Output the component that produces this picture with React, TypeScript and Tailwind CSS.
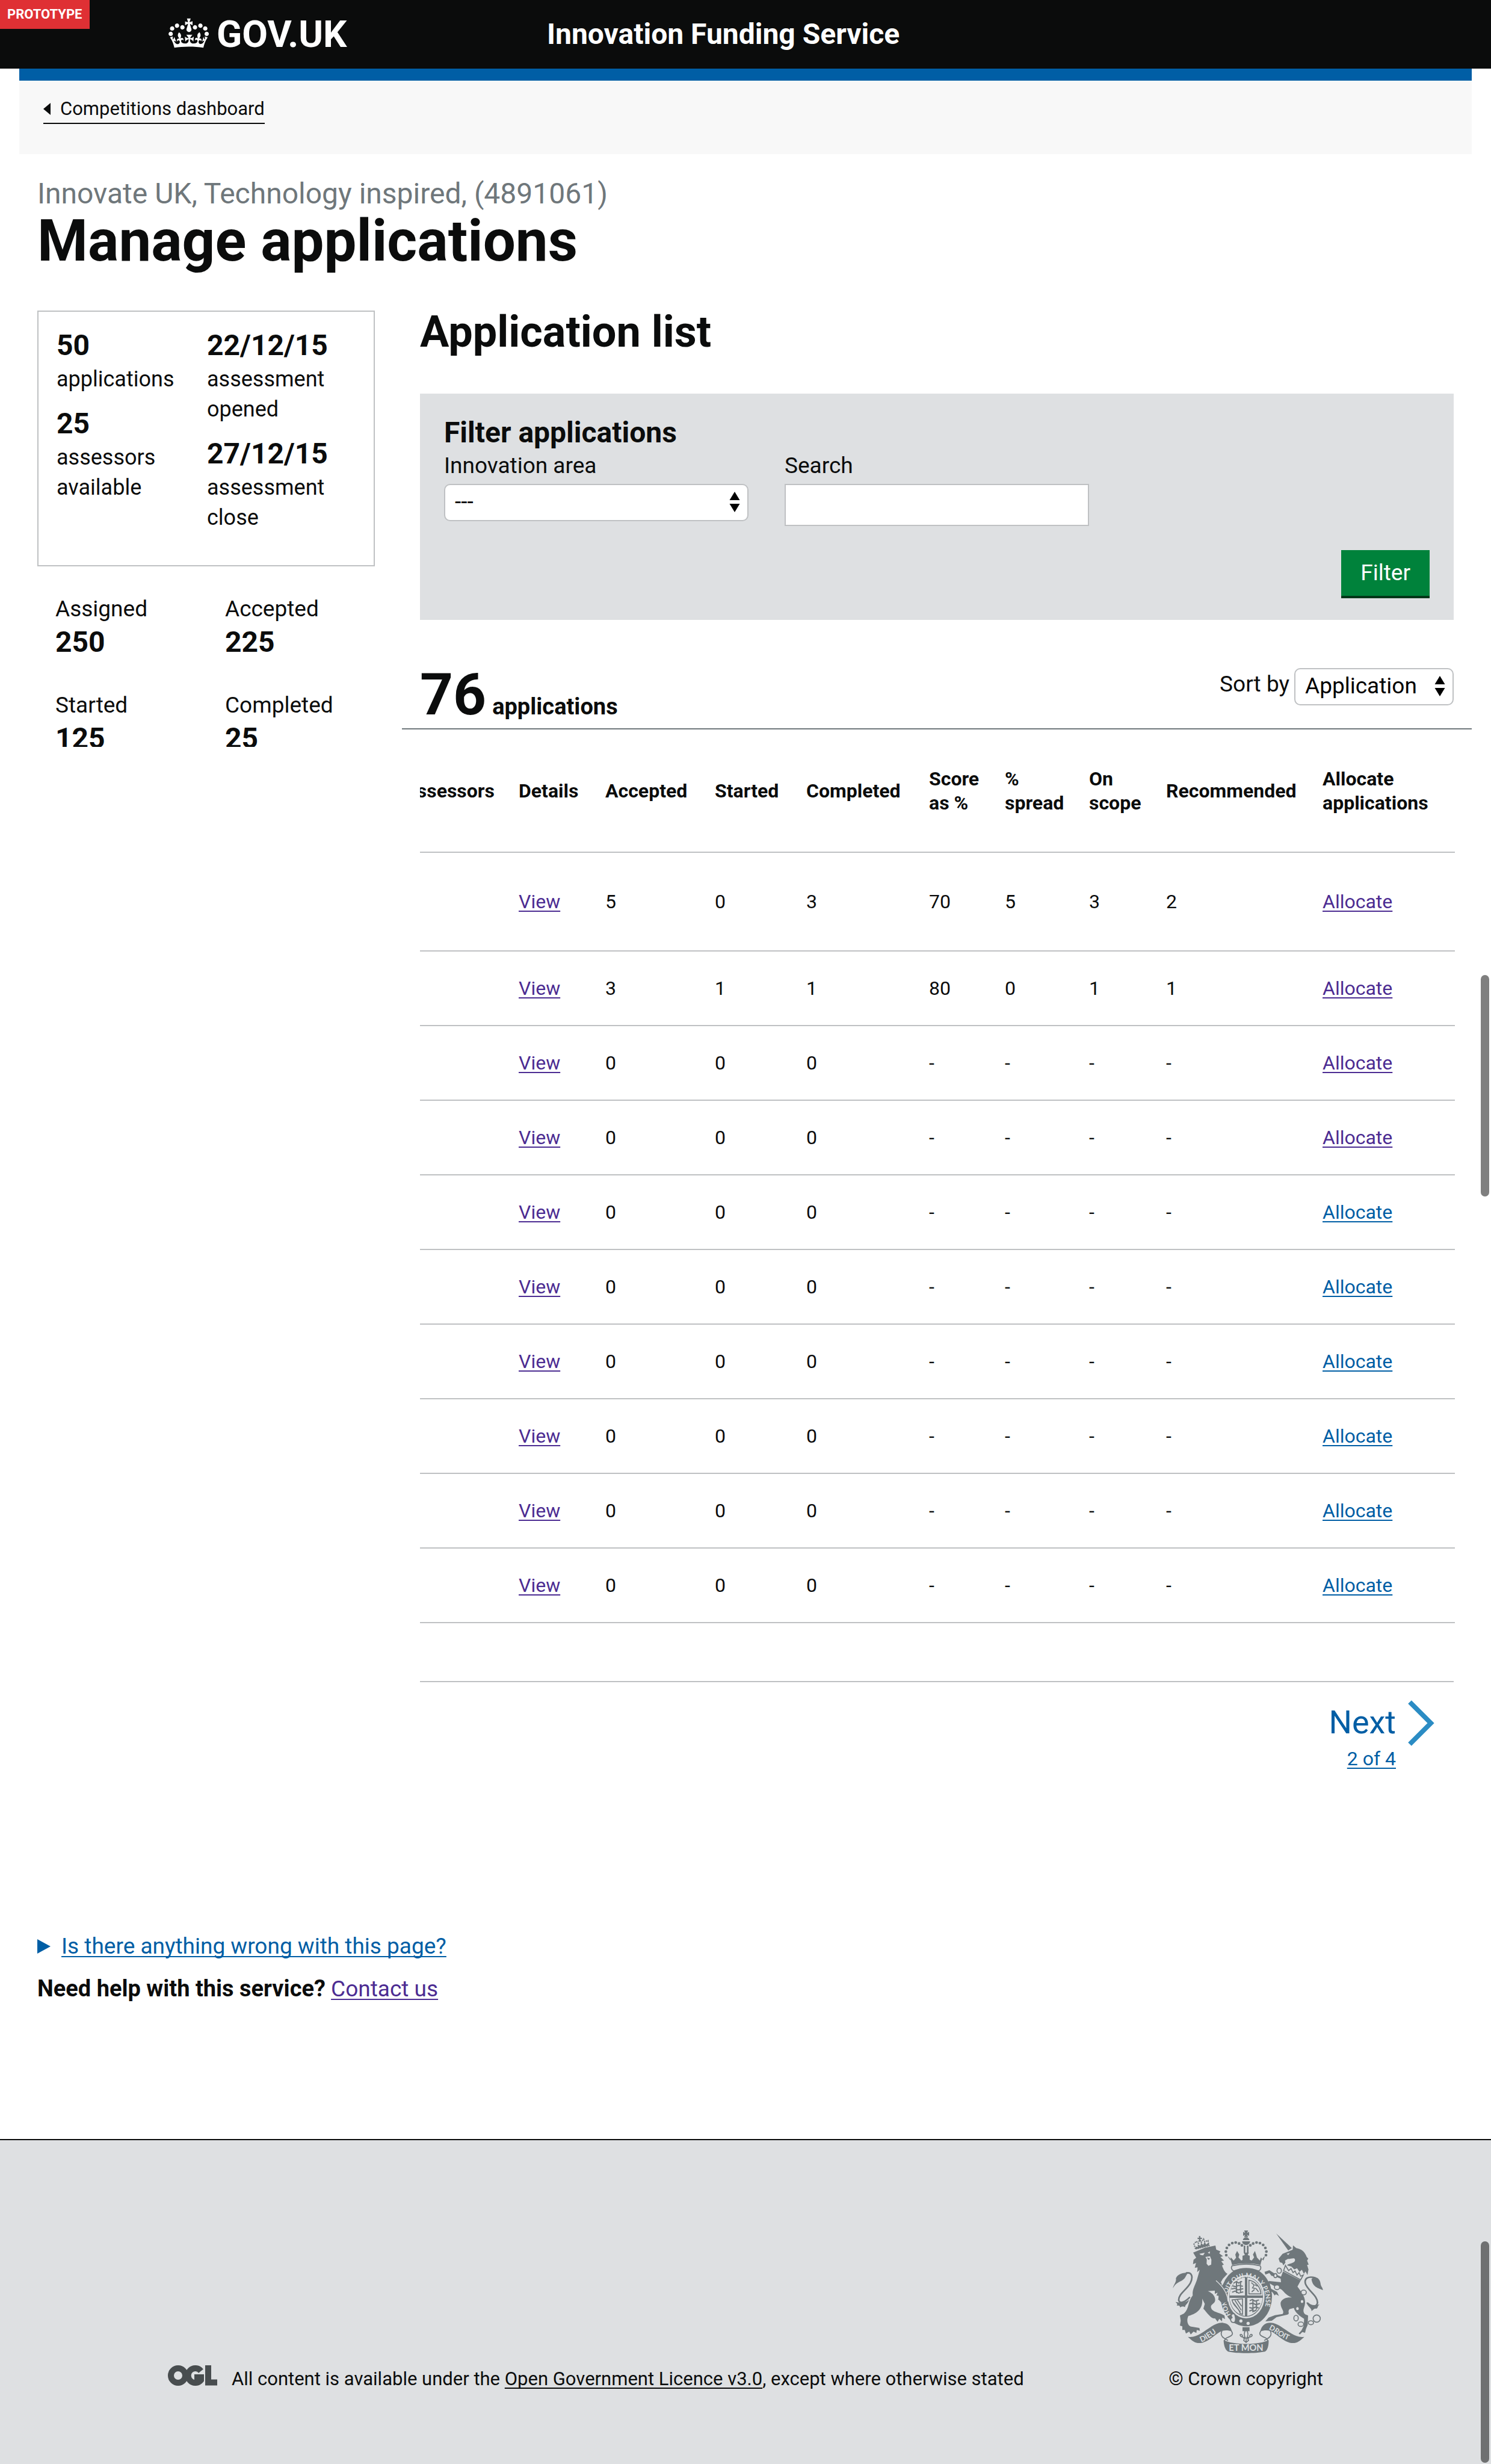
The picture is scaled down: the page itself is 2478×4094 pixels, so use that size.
import type { ReactNode } from "react";

type Row = {
  accepted: number;
  started: number;
  completed: number;
  score: string;
  spread: string;
  scope: string;
  recommended: string;
  visited: boolean;
};

const emptyRow = (visited: boolean): Row => ({
  accepted: 0,
  started: 0,
  completed: 0,
  score: "-",
  spread: "-",
  scope: "-",
  recommended: "-",
  visited,
});

const rows: Row[] = [
  { accepted: 5, started: 0, completed: 3, score: "70", spread: "5", scope: "3", recommended: "2", visited: true },
  { accepted: 3, started: 1, completed: 1, score: "80", spread: "0", scope: "1", recommended: "1", visited: true },
  emptyRow(true),
  emptyRow(true),
  emptyRow(false),
  emptyRow(false),
  emptyRow(false),
  emptyRow(false),
  emptyRow(false),
  emptyRow(false),
];

const headings = [
  "Details",
  "Accepted",
  "Started",
  "Completed",
  "Score as %",
  "% spread",
  "On scope",
  "Recommended",
  "Allocate applications",
];

function TextLink({ visited = false, children }: { visited?: boolean; children: ReactNode }) {
  return (
    <a
      href="#"
      className={`underline decoration-2 underline-offset-4 [text-decoration-skip-ink:none] ${
        visited ? "text-[#4c2c92]" : "text-[#005ea5]"
      }`}
    >
      {children}
    </a>
  );
}

function CrownLogo() {
  return (
    <svg viewBox="0 0 36 32" className="mb-2 h-[60px] w-[68px]" fill="currentColor" aria-hidden="true">
      <path d="M6.7 12.2c1 .4 2.1-.1 2.5-1s-.1-2.1-1-2.5c-1-.4-2.1.1-2.5 1-.4 1 0 2.1 1 2.5m-4.3 2.5c1 .4 2.1-.1 2.5-1s-.1-2.1-1-2.5c-1-.4-2.1.1-2.5 1-.5 1 0 2.1 1 2.5m-1.3 4.8c1 .4 2.1-.1 2.5-1s-.1-2.1-1-2.5c-1-.4-2.1.1-2.5 1-.4 1 0 2.1 1 2.5m10.4-5.8c1 .4 2.1-.1 2.5-1s-.1-2.1-1-2.5c-1-.4-2.1.1-2.5 1s0 2.1 1 2.5m17.4-1.5c-1 .4-2.1-.1-2.5-1s.1-2.1 1-2.5c1-.4 2.1.1 2.5 1 .5 1 0 2.1-1 2.5m4.3 2.5c-1 .4-2.1-.1-2.5-1s.1-2.1 1-2.5c1-.4 2.1.1 2.5 1 .5 1 0 2.1-1 2.5m1.3 4.8c-1 .4-2.1-.1-2.5-1s.1-2.1 1-2.5c1-.4 2.1.1 2.5 1 .4 1 0 2.1-1 2.5m-10.4-5.8c-1 .4-2.1-.1-2.5-1s.1-2.1 1-2.5c1-.4 2.1.1 2.5 1s0 2.1-1 2.5m-5.3-4.9 2.4 1.3V6.5l-2.4.8c-.1-.1-.1-.2-.2-.2s1-3 1-3h-3.4l1 3c-.1.1-.2.1-.2.2-.1.1-2.4-.7-2.4-.7v3.5L17 8.8c.1.1.1.2.2.2l-1.3 4.3c-.1.2-.1.4-.1.6 0 1.1.8 2 1.9 2.2h.7c1-.2 1.9-1.1 1.9-2.1 0-.2 0-.4-.1-.6l-1.3-4.3c-.1-.2 0-.2.1-.3m-1 20.3c4.6 0 8.9.3 12.8.9 1.1-4.6 2.4-7.2 3.8-9.1l-2.6-.9c.3 1.3.3 1.9 0 2.8-.4-.4-.8-1.2-1.1-2.4l-1.2 4.2c.8-.5 1.4-.9 2-.9-1.2 2.6-2.7 3.2-3.6 3-1.2-.2-1.7-1.3-1.5-2.2.3-1.3 1.6-1.6 2.2-.1 1.2-2.4-.8-3.1-2.1-2.4 1.9-1.9 2.2-3.6.6-5.7-2.2 1.7-2.2 3.3-1.2 5.6-1.3-1.5-3.3-.7-2.5 1.7.9-1.4 2.1-.5 2 .8-.2 1.2-1.7 2.1-3.7 1.9-2.8-.2-3-2.2-3-3.7.7-.1 1.9.5 3 2l.4-4.4c-1.1 1.2-2.2 1.4-3.3 1.4.4-1.2 2.1-3.1 2.1-3.1h-5.5s1.8 2 2.1 3.1c-1.1 0-2.2-.3-3.3-1.4l.4 4.4c1.1-1.5 2.3-2.1 3-2-.1 1.6-.2 3.5-3 3.7-1.9.2-3.5-.7-3.7-1.9-.2-1.3 1-2.2 1.9-.7.7-2.4-1.3-3.1-2.6-1.7 1-2.3 1-4-1.2-5.6-1.6 2.1-1.3 3.8.6 5.7-1.3-.7-3.2 0-2.1 2.4.6-1.5 1.9-1.1 2.2.1.2.9-.4 1.9-1.5 2.2-1 .2-2.5-.5-3.7-3 .7 0 1.3.4 2 .9L5 20.4c-.3 1.2-.7 1.9-1.2 2.4-.3-.8-.2-1.5 0-2.8l-2.6.9C2.7 22.8 4 25.4 5.1 30c3.8-.5 8.2-.9 12.7-.9" />
    </svg>
  );
}

function SelectArrows() {
  return (
    <svg
      viewBox="0 0 18 36"
      className="pointer-events-none absolute top-3 right-3.5 h-9 w-[18px]"
      aria-hidden="true"
    >
      <path d="M9 1 17.500 15H.5zM9 35 .5 21h17z" fill="#000" />
    </svg>
  );
}

function OglLogo() {
  return (
    <svg viewBox="0 0 82 34" className="mb-3 h-[34px] w-[82px] shrink-0" role="img" aria-label="OGL" fill="none" stroke="#484d4f" strokeWidth="10">
      <ellipse cx="17" cy="17" rx="12" ry="12" />
      <path d="M55 9.500A12 12 0 1 0 55 24.500V20H44" />
      <path d="M67 0V28.500H82" />
    </svg>
  );
}

function ArmsScroll() {
  return (
    <g>
      <path d="M106 572C130 576 150 568 170 556C215 530 235 504 275 502C305 503 318 518 326 545C310 540 292 538 276 543C240 556 205 608 155 603C135 600 120 585 106 572Z" />
      <path d="M276 542C262 568 285 580 306 590M322 543C338 562 318 570 300 577C292 581 288 588 287 598" fill="none" stroke="#6f777b" strokeWidth="5" />
    </g>
  );
}

const crownDots = [
  [297, 165], [295, 147], [300, 129], [311, 114], [327, 105], [344, 102], [361, 107], [375, 116],
];

function RoyalArms() {
  const pale = "#dee0e2";
  return (
    <svg viewBox="30 42 750 612" className="h-[204px] w-[250px]" fill="#6f777b" role="img" aria-label="Royal coat of arms">
      <defs>
        <path id="motto" d="M320 462A98 114 0 1 1 474 460" />
        <path id="scroll-left" d="M172 598C200 590 236 562 274 532" />
        <path id="scroll-right" d="M508 534C545 548 575 588 640 596" />
      </defs>

      {/* lion */}
      <path d="M132 152L190 128L243 117L247 137L268 146L262 156L281 170L268 174L286 192L272 195L285 212L276 216C283 238 290 250 303 258L280 283L270 300C292 330 304 360 304 396L294 390L290 402L280 390L270 400L266 385L256 388L262 368L248 366L254 352L240 358L240 342L205 344C228 352 248 375 240 397C232 412 216 412 222 430C230 450 262 450 288 466L291 484L277 476L276 495L262 482L254 497L241 480C222 484 205 456 183 432L190 408L177 382C181 420 165 452 108 468C96 494 106 522 128 522L163 528L166 542L150 538L148 553L134 546L120 560L112 546L96 556L90 538L78 538L78 520L66 516L70 492L66 466L86 456C114 430 104 396 130 365C126 340 140 318 150 290L165 238L152 250L154 226L140 228L146 204L131 210L134 188L147 178Z" />
      <path d="M163 158L190 153L182 166L170 164ZM205 152L216 146L214 158Z" fill={pale} />
      <path d="M193 174L216 170L223 188L222 212L208 218L199 208L200 186Z" fill={pale} />
      <path d="M200 178L216 180L210 190Z" />
      <path d="M144 134L136 110L148 96L158 106L164 84L172 102L184 84L190 98L206 92L211 118Z" fill="none" stroke="#6f777b" strokeWidth="6" strokeDasharray="7 4" />
      <path d="M146 136L212 116L208 104L196 112L190 98L182 114L172 104L168 118L154 112L156 124L144 122ZM160 70h8v8h8v7h-8v12h-6v-12h-8v-7h8z" />
      <path d="M31 330C34 312 50 300 46 280C56 258 80 252 110 252C94 262 98 278 78 290C60 300 44 304 31 330Z" />
      <path d="M96 254C128 248 132 276 118 304C98 340 58 358 60 390C66 410 90 400 116 374" fill="none" stroke="#6f777b" strokeWidth="8" />
      <path d="M44 398C60 400 84 408 112 388C104 410 90 414 92 424C80 418 74 420 66 426C68 414 56 416 50 416C56 408 50 404 44 398Z" />

      {/* unicorn */}
      <path d="M546 57L624 130L606 142Z" />
      <path d="M558 182L578 158L604 148L628 138L630 116L646 130C672 134 690 150 698 174L706 182L700 192L708 212L700 214L707 236L702 264L692 246L684 258L674 238L662 248L650 230L636 236L622 222L600 216C606 204 640 208 640 188C638 174 622 184 604 184L590 192L592 202L582 216L576 204L564 200Z" />
      <path d="M598 158L614 154L606 164Z" fill={pale} />
      <path d="M592 216L583 242L668 288L681 264L668 270L660 252L650 264L640 244L630 252L620 232L608 242Z" fill={pale} stroke="#6f777b" strokeWidth="5" />
      <path d="M580 246L668 292L652 322C668 345 690 368 690 400C690 428 672 440 690 460L705 466L703 512L694 534L690 552L676 548L664 560L658 556L672 540L684 516L685 482C660 466 640 450 634 428L612 434C600 450 618 456 600 462L548 474L524 492L492 495L508 476L540 464L578 458C590 444 566 430 568 402C575 380 600 374 624 376C596 366 586 348 572 336L530 316L514 306L520 332L550 348L560 368L545 360L538 366L528 350L504 336L498 300L512 294L570 300L568 282L544 272L522 268L512 254L492 262L488 248L512 240L546 262L570 272Z" />
      <path d="M779 340C766 330 728 330 722 284C736 266 764 276 767 306C768 322 778 324 779 340Z" />
      <path d="M742 278C706 268 684 280 692 308C706 344 752 366 752 402C748 424 726 426 700 402" fill="none" stroke="#6f777b" strokeWidth="8" />
      <path d="M696 400C712 414 736 418 762 410C750 420 756 428 746 432C738 428 732 436 722 444C724 430 704 424 696 400Z" />
      <g fill={pale} stroke="#6f777b" strokeWidth="5">
        <ellipse cx="561" cy="242" rx="11" ry="13" />
        <ellipse cx="542" cy="267" rx="8" ry="10" />
        <ellipse cx="550" cy="325" rx="13" ry="12" />
        <ellipse cx="683" cy="351" rx="13" ry="12" />
        <ellipse cx="675" cy="396" rx="9" ry="10" />
        <ellipse cx="652" cy="431" rx="9" ry="10" />
        <ellipse cx="645" cy="479" rx="11" ry="14" />
        <ellipse cx="669" cy="509" rx="14" ry="11" />
        <ellipse cx="719" cy="502" rx="13" ry="10" />
        <ellipse cx="748" cy="481" rx="18" ry="18" />
      </g>

      {/* garter and shield */}
      <ellipse cx="397" cy="372" rx="128" ry="148" />
      <path d="M302 268C276 290 268 330 272 360" fill="none" stroke={pale} strokeWidth="6" />
      <ellipse cx="396" cy="372" rx="92" ry="108" fill={pale} />
      <ellipse cx="396" cy="372" rx="84" ry="100" />
      <path d="M390 276v90h-76c0-42 30-84 76-90ZM402 276c46 6 76 48 76 90h-76ZM314 378h76v90c-42-6-74-46-76-90ZM402 378h76c-2 44-34 84-76 90Z" fill={pale} />
      <g fill="none" stroke="#6f777b" strokeWidth="6">
        <path d="M334 304l14-8 10 8 18-8M328 318l16 4 14-6 22 4M322 334l18-4 14 8 28-6M326 350l16-6 16 10 24-6M348 296v58M368 294v60" />
        <path d="M414 392l14-6 12 8 20-6M412 408l18-4 14 8 22-6M412 426l16 4 14-6 18 4M412 444l14-6 10 6 12-6M430 388v62M448 390v46" />
        <path d="M410 290c30 4 58 32 60 68h-60ZM422 302l14 12-8 14 18 4 12 16M440 312l12 8M424 348l14-12" strokeWidth="5" />
        <path d="M326 388l52-6v78l-12-4c-4-30-32-30-40-68ZM340 390l32 50M352 388l22 32M332 402l36 48" strokeWidth="5" />
      </g>
      <text fontFamily="Lato, sans-serif" fontWeight="700" fontSize="32" fill={pale}>
        <textPath href="#motto">HONI SOIT QUI MAL Y PENSE</textPath>
      </text>
      <path d="M262 300C286 320 306 356 304 396L290 402L270 398L258 386Z" />
      <path d="M246 292C276 318 304 350 306 396" fill="none" stroke={pale} strokeWidth="4" />
      <circle cx="370" cy="493" r="8" fill={pale} />
      <circle cx="406" cy="505" r="8" fill={pale} />
      <path d="M338 458C322 454 318 466 326 476C314 482 318 504 338 500C346 490 344 474 338 458Z" fill={pale} stroke="#6f777b" strokeWidth="5" />

      {/* crown */}
      <path d="M386 42h20l-5 12 10-5v20l-10-5 5 10h-20l5-10-10 5v-20l10 5zM380 90a16 14 0 0 1 32 0zM376 96h40c-2 24-38 24-40 0ZM384 118h8v34h-8zM400 118h8v34h-8zM384 152h26l-6 12 10 4v22h-36v-22l12-4z" />
      {crownDots.map(([x, y]) => (
        <g key={`${x}-${y}`}>
          <circle cx={x} cy={y} r="7" />
          <circle cx={792 - x} cy={y} r="7" />
        </g>
      ))}
      <path d="M304 170C316 178 320 186 326 214C370 204 424 204 468 214C472 190 478 178 490 170L482 192L470 176L464 192L450 176L446 162L440 144L430 162L436 176L424 192L396 180L372 192L358 176L362 162L351 144L342 162L346 178L334 192L320 176L316 190Z" />
      <path d="M326 218C370 208 424 208 466 218C474 228 468 240 458 244C420 228 374 228 334 244C322 238 320 226 326 218Z" fill={pale} stroke="#6f777b" strokeWidth="5" />

      {/* motto scroll */}
      <ArmsScroll />
      <g transform="matrix(-1 0 0 1 792 0)">
        <ArmsScroll />
      </g>
      <path d="M284 588C330 614 464 614 508 588C510 610 504 640 490 646C440 656 350 656 306 646C290 636 284 610 284 588Z" />
      <g fontFamily="Lato, sans-serif" fontWeight="700" fontSize="38" fill={pale}>
        <text>
          <textPath href="#scroll-left">DIEU</textPath>
        </text>
        <text fontSize="36">
          <textPath href="#scroll-right">DROIT</textPath>
        </text>
        <text x="396" y="643" textAnchor="middle" fontSize="44">
          ET MON
        </text>
      </g>
      <path d="M378 524h35v20h-35z" />
      <path d="M396 534C384 552 386 562 390 574C380 576 366 572 366 562C372 556 380 564 378 572M396 534C408 552 406 562 402 574C412 576 428 572 426 562C420 556 412 564 414 572M380 578h32M396 580v18M388 580l-4 10 12 10 12-10-4-10" fill="none" stroke="#6f777b" strokeWidth="5" />
    </svg>
  );
}

function BoxStat({ value, label }: { value: string; label: string }) {
  return (
    <div>
      <div className="text-[48px] leading-[62px] font-bold">{value}</div>
      <div className="text-[36px] leading-[50px]">{label}</div>
    </div>
  );
}

function Stat({ value, label }: { value: string; label: string }) {
  return (
    <div>
      <div className="text-[37px] leading-[50px]">{label}</div>
      <div className="text-[48px] leading-[60px] font-bold">{value}</div>
    </div>
  );
}

export default function App() {
  return (
    <div className="relative min-h-screen bg-white font-[Roboto,sans-serif] text-[#0b0c0c]">
      <header className="bg-[#0b0c0c] text-white">
        <div className="mx-auto flex h-[114px] max-w-[1918px] items-center">
          <a href="#" className="flex w-[629px] shrink-0 items-center gap-3 text-[62px] leading-[60px] font-bold">
            <CrownLogo />
            GOV.UK
          </a>
          <a href="#" className="text-[48px] leading-[60px] font-bold">
            Innovation Funding Service
          </a>
        </div>
      </header>
      <div className="absolute top-0 left-0 bg-[#df3034] px-3 text-[22px] leading-[48px] font-bold text-white">
        PROTOTYPE
      </div>

      <div className="mx-8 border-t-[20px] border-[#005ea5] bg-[#f8f8f8] px-10 pt-6 pb-[50px]">
        <a
          href="#"
          className="inline-flex items-center gap-4 border-b-2 border-[#0b0c0c] align-top text-[31px] leading-[46px]"
        >
          <svg viewBox="0 0 12 20" className="h-5 w-3" aria-hidden="true">
            <path d="M0 10 12 0v20z" fill="#0b0c0c" />
          </svg>
          Competitions dashboard
        </a>
      </div>

      <main className="mx-8 px-[30px] pt-9">
        <h1>
          <span className="block text-[48px] leading-[60px] text-[#6f777b]">
            Innovate UK, Technology inspired, (4891061)
          </span>
          <span className="block text-[96px] leading-[96px] font-bold">Manage applications</span>
        </h1>

        <div className="mt-[68px] flex gap-[75px]">
          <aside className="w-[561px] shrink-0">
            <div className="grid grid-cols-[220px_1fr] gap-[30px] border-2 border-[#bfc1c3] px-[30px] pt-[25px] pb-[54px]">
              <div className="flex flex-col gap-[18px]">
                <BoxStat value="50" label="applications" />
                <BoxStat value="25" label="assessors available" />
              </div>
              <div className="flex flex-col gap-[18px]">
                <BoxStat value="22/12/15" label="assessment opened" />
                <BoxStat value="27/12/15" label="assessment close" />
              </div>
            </div>
            <div className="mt-[46px] grid h-[254px] grid-cols-[282px_1fr] content-start gap-y-[50px] overflow-hidden pl-[30px]">
              <Stat label="Assigned" value="250" />
              <Stat label="Accepted" value="225" />
              <Stat label="Started" value="125" />
              <Stat label="Completed" value="25" />
            </div>
          </aside>

          <section className="min-w-0 flex-1">
            <h2 className="text-[72px] leading-[72px] font-bold">Application list</h2>

            <form className="mt-[66px] bg-[#dee0e2] p-10" onSubmit={(e) => e.preventDefault()}>
              <h3 className="text-[48px] leading-[50px] font-bold">Filter applications</h3>
              <div className="grid grid-cols-3 gap-[60px] text-[37px]">
                <div>
                  <label htmlFor="area" className="block leading-[60px]">
                    Innovation area
                  </label>
                  <div className="relative">
                    <select
                      id="area"
                      className="h-[62px] w-full appearance-none rounded-[10px] border-2 border-[#bfc1c3] bg-white px-4 pb-2 text-black"
                    >
                      <option>---</option>
                    </select>
                    <SelectArrows />
                  </div>
                </div>
                <div>
                  <label htmlFor="search" className="block leading-[60px]">
                    Search
                  </label>
                  <input
                    id="search"
                    type="text"
                    className="block h-[70px] w-full border-2 border-[#bfc1c3] bg-white px-4"
                  />
                </div>
              </div>
              <div className="mt-10 flex justify-end">
                <button
                  type="submit"
                  className="h-[76px] bg-[#00823b] px-8 text-[37px] text-white shadow-[0_4px_0_#003618]"
                >
                  Filter
                </button>
              </div>
            </form>

            <div className="-mr-[30px] -ml-[30px] mt-[76px] flex items-start justify-between border-b-2 border-[#6f777b] px-[30px] pb-2">
              <p className="flex items-baseline gap-2.5 font-bold">
                <span className="text-[96px] leading-[96px]">76</span>
                <span className="text-[38px] leading-[40px]">applications</span>
              </p>
              <div className="mt-1 flex gap-2 text-[37px]">
                <label htmlFor="sort" className="leading-[54px]">
                  Sort by
                </label>
                <div className="relative">
                  <select
                    id="sort"
                    className="h-[62px] w-[265px] appearance-none rounded-[10px] border-2 border-[#bfc1c3] bg-white px-4 pb-2 text-black"
                  >
                    <option>Application</option>
                  </select>
                  <SelectArrows />
                </div>
              </div>
            </div>

            <div className="-mr-0.5 flex justify-end overflow-hidden">
              <table className="w-[calc(100%+60px)] shrink-0 table-fixed border-collapse text-left text-[32px] leading-[40px]">
                <colgroup>
                  <col className="w-[224px]" />
                  <col className="w-[144px]" />
                  <col className="w-[182px]" />
                  <col className="w-[152px]" />
                  <col className="w-[204px]" />
                  <col className="w-[126px]" />
                  <col className="w-[140px]" />
                  <col className="w-[128px]" />
                  <col className="w-[260px]" />
                  <col />
                </colgroup>
                <thead>
                  <tr className="h-[204px] border-b-2 border-[#bfc1c3]">
                    <th scope="col" className="pr-10 text-right">
                      Assessors
                    </th>
                    {headings.map((h) => (
                      <th key={h} scope="col" className="pr-5">
                        {h}
                      </th>
                    ))}
                  </tr>
                </thead>
                <tbody>
                  {rows.map((r, i) => (
                    <tr key={i} className={`border-b-2 border-[#bfc1c3] ${i === 0 ? "h-[164px]" : "h-[124px]"}`}>
                      <td></td>
                      <td>
                        <TextLink visited>View</TextLink>
                      </td>
                      <td>{r.accepted}</td>
                      <td>{r.started}</td>
                      <td>{r.completed}</td>
                      <td>{r.score}</td>
                      <td>{r.spread}</td>
                      <td>{r.scope}</td>
                      <td>{r.recommended}</td>
                      <td>
                        <TextLink visited={r.visited}>Allocate</TextLink>
                      </td>
                    </tr>
                  ))}
                </tbody>
              </table>
            </div>

            <nav
              aria-label="Pagination"
              className="mt-24 flex justify-end border-t-2 border-[#bfc1c3] pt-[30px] pr-8"
            >
              <a href="#" className="flex items-start gap-5 text-[#005ea5]">
                <span className="flex flex-col items-end">
                  <span className="text-[54px] leading-[74px]">Next</span>
                  <span className="text-[32px] leading-[46px] underline decoration-2 underline-offset-4">2 of 4</span>
                </span>
                <svg viewBox="0 0 44 76" className="h-[76px] w-11" aria-hidden="true">
                  <path d="M3 3 38 38 3 73" fill="none" stroke="#2b8cc4" strokeWidth="8" />
                </svg>
              </a>
            </nav>
          </section>
        </div>

        <div className="mt-[264px] text-[37px] leading-[50px]">
          <details>
            <summary className="flex cursor-pointer list-none items-center gap-[18px] text-[#005ea5]">
              <svg viewBox="0 0 22 24" className="h-6 w-[22px]" aria-hidden="true">
                <path d="M0 0 22 12 0 24z" fill="#005ea5" />
              </svg>
              <span className="underline decoration-2 underline-offset-4 [text-decoration-skip-ink:none]">
                Is there anything wrong with this page?
              </span>
            </summary>
          </details>
          <p className="mt-5">
            <strong className="text-[38px] font-bold">Need help with this service?</strong>{" "}
            <TextLink visited>Contact us</TextLink>
          </p>
        </div>
      </main>

      <footer className="mt-56 border-t-2 border-[#0b0c0c] bg-[#dee0e2] pt-[150px] pb-[120px] text-[31px] leading-[46px]">
        <div className="mx-auto flex max-w-[1920px] items-end justify-between">
          <div className="flex items-end gap-6">
            <OglLogo />
            <p>
              All content is available under the{" "}
              <a
                href="#"
                className="underline decoration-2 underline-offset-4 [text-decoration-skip-ink:none]"
              >
                Open Government Licence v3.0
              </a>
              , except where otherwise stated
            </p>
          </div>
          <a href="#" className="flex flex-col items-end gap-5">
            <RoyalArms />
            © Crown copyright
          </a>
        </div>
      </footer>

      <div className="absolute top-[1620px] right-[3px] h-[368px] w-3.5 rounded-full bg-[#7f7f7f]" />
      <div className="absolute right-[3px] bottom-1 h-[368px] w-3.5 rounded-full bg-[#6f7071]" />
    </div>
  );
}
